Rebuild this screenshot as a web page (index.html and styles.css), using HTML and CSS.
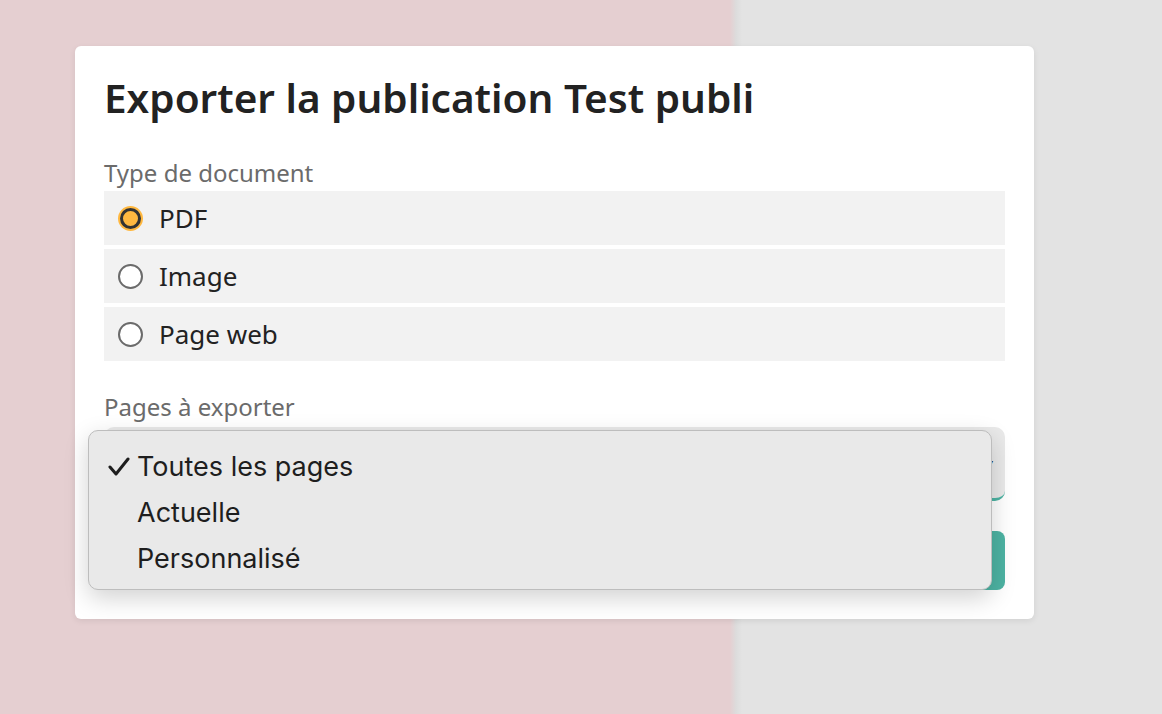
FILE: index.html
```html
<!DOCTYPE html>
<html lang="fr">
<head>
  <meta charset="UTF-8">
  <meta name="viewport" content="width=device-width, initial-scale=1.0">
  <title>Exporter la publication</title>
  <link rel="stylesheet" href="styles.css">
</head>
<body>
  <div class="fond">
    <div class="modal">
      <h1>Exporter la publication Test publi</h1>

      <p class="label">Type de document</p>
      <div class="choix">
        <label class="option"><span class="radio checked"></span>PDF</label>
        <label class="option"><span class="radio"></span>Image</label>
        <label class="option"><span class="radio"></span>Page web</label>
      </div>

      <p class="label pages">Pages à exporter</p>
      <div class="select-zone">
        <div class="select">Toutes les pages<span class="fleche">&#9662;</span></div>
        <ul class="menu">
          <li class="actif">
            <svg class="coche" width="22" height="20" viewBox="0 0 22 20"><polyline points="2,10 8,17 20,2" fill="none" stroke="#1e1e1e" stroke-width="3" stroke-linecap="round" stroke-linejoin="round"/></svg>
            Toutes les pages
          </li>
          <li>Actuelle</li>
          <li>Personnalisé</li>
        </ul>
      </div>

      <div class="actions">
        <button class="exporter">Exporter</button>
      </div>
    </div>
  </div>
</body>
</html>
```

FILE: styles.css
```css
body {
  margin: 0;
  font-family: "Noto Sans", "Open Sans", sans-serif;
  color: #222;
}
.fond {
  height: 714px;
  overflow: hidden;
  background: linear-gradient(to right, #e5cfd1 0, #e5cfd1 730px, #dcdcdc 736px, #e3e3e3 742px, #e3e3e3 100%);
  padding-top: 46px;
  box-sizing: border-box;
}
.modal {
  width: 959px;
  height: 573px;
  margin-left: 75px;
  box-sizing: border-box;
  padding: 27px 29px 0;
  background: #fff;
  border-radius: 6px;
  box-shadow: 0 2px 6px rgba(0,0,0,0.08);
}
h1 {
  margin: 0;
  font-size: 40.5px;
  font-weight: 600;
  line-height: 50px;
  color: #222;
}
.label {
  margin: 36px 0 4px;
  font-size: 24px;
  line-height: 28px;
  color: #6b6b6b;
}
.label.pages {
  margin-top: 32px;
  margin-bottom: 6px;
}
.choix {
  display: flex;
  flex-direction: column;
  gap: 4px;
}
.option {
  display: flex;
  align-items: center;
  height: 54px;
  padding-left: 14px;
  background: #f2f2f2;
  font-size: 26px;
  color: #222;
}
.radio {
  width: 21px;
  height: 21px;
  margin-right: 16px;
  border: 2px solid #6b6b6b;
  border-radius: 50%;
  background: #fff;
}
.radio.checked {
  width: 15px;
  height: 15px;
  margin-left: 2px;
  margin-right: 18px;
  border: 3px solid #333;
  background: #ffb840;
  box-shadow: 0 0 0 2px #ffb840;
}
.select-zone {
  position: relative;
}
.select {
  display: flex;
  align-items: center;
  justify-content: space-between;
  height: 71px;
  padding: 0 12px 0 15px;
  background: #e9e9e9;
  border-radius: 10px;
  border-bottom: 3px solid #4db3a3;
  font-size: 26px;
}
.fleche {
  font-size: 12px;
}
.menu {
  position: absolute;
  top: 3px;
  left: -16px;
  width: 904px;
  height: 160px;
  box-sizing: border-box;
  margin: 0;
  padding: 13px 0 0;
  list-style: none;
  background: #e9e9e9;
  border: 1px solid #bdbdbd;
  border-radius: 10px;
  box-shadow: 0 8px 24px rgba(0,0,0,0.18);
  font-family: Inter, "Noto Sans", sans-serif;
  font-size: 27px;
}
.menu li {
  display: flex;
  align-items: center;
  height: 46px;
  line-height: 36px;
  padding-left: 48px;
  color: #1e1e1e;
}
.menu li.actif {
  padding-left: 19px;
  gap: 7px;
}
.coche {
  flex: none;
}
.actions {
  display: flex;
  justify-content: flex-end;
  margin-top: 30px;
}
.exporter {
  width: 160px;
  height: 59px;
  border: none;
  border-radius: 8px;
  background: #4db3a3;
  color: #fff;
  font-family: "Noto Sans", sans-serif;
  font-size: 22px;
}
```
